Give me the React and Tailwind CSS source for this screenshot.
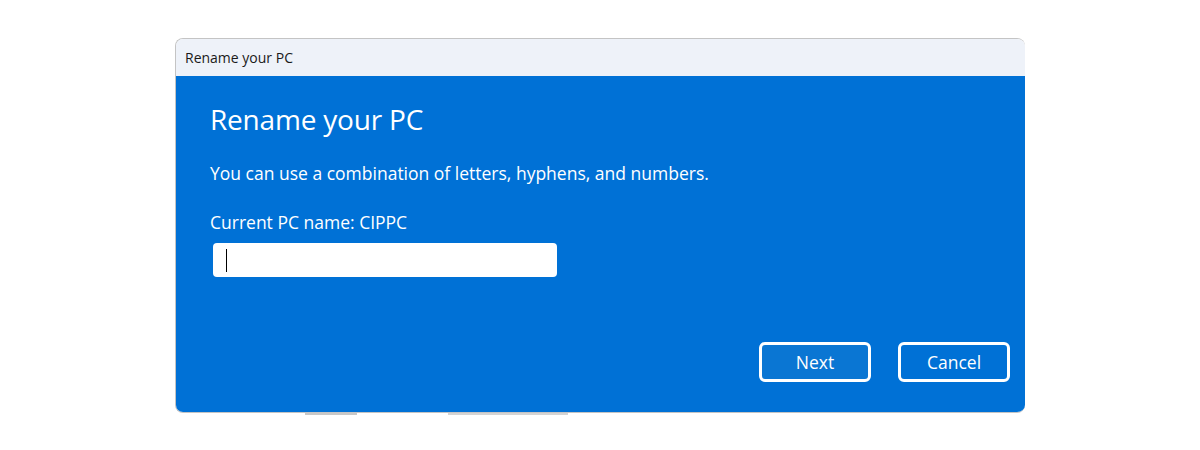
import React from 'react';

export default function App() {
  const font = { fontFamily: '"Open Sans", "Noto Sans", sans-serif' };
  return (
    <div className="w-[1200px] h-[450px] bg-white pl-[175px] pt-[38px]" style={font}>
      <div className="relative w-[850px]">
        {/* window */}
        <div className="relative z-10 w-[850px] rounded-t-[8px] rounded-b-[8px] border border-[#c4c4c4] border-r-0 overflow-hidden">
          <div className="h-[37px] bg-[#eef2f9] flex items-center pl-[9px] text-[14px] text-[#1a1a1a]">
            Rename your PC
          </div>
          <div className="h-[336px] bg-[#0071d6] text-white pl-[34px] pr-[15px] flex flex-col">
            <h1 className="mt-[25px] text-[28px] leading-[36px] font-normal tracking-[-0.2px]">Rename your PC</h1>
            <p className="mt-[24px] text-[17.5px] leading-[24px]">
              You can use a combination of letters, hyphens, and numbers.
            </p>
            <p className="mt-[25px] text-[17.5px] leading-[24px]">Current PC name: CIPPC</p>
            <div className="mt-[9px] ml-[3px] w-[344px] h-[34px] bg-white rounded-[4px] flex items-center pl-[13px]">
              <div className="w-[1px] h-[23px] bg-black" />
            </div>
            <div className="mt-auto mb-[30px] flex justify-end gap-[27px]">
              <button className="w-[112px] h-[40px] rounded-[6px] border-[3px] border-white bg-[#0a76d3] text-[17.5px] text-white">
                Next
              </button>
              <button className="w-[112px] h-[40px] rounded-[6px] border-[3px] border-white bg-[#0071d6] text-[17.5px] text-white">
                Cancel
              </button>
            </div>
          </div>
        </div>
        {/* tops of the page content peeking out below the window */}
        <div className="flex h-[3px] items-start">
          <div className="ml-[130px] w-[52px] h-[2px] bg-[#c8c8c8]" />
          <div className="ml-[91px] w-[120px] h-[2px] bg-[#d4d4d4]" />
        </div>
      </div>
    </div>
  );
}
